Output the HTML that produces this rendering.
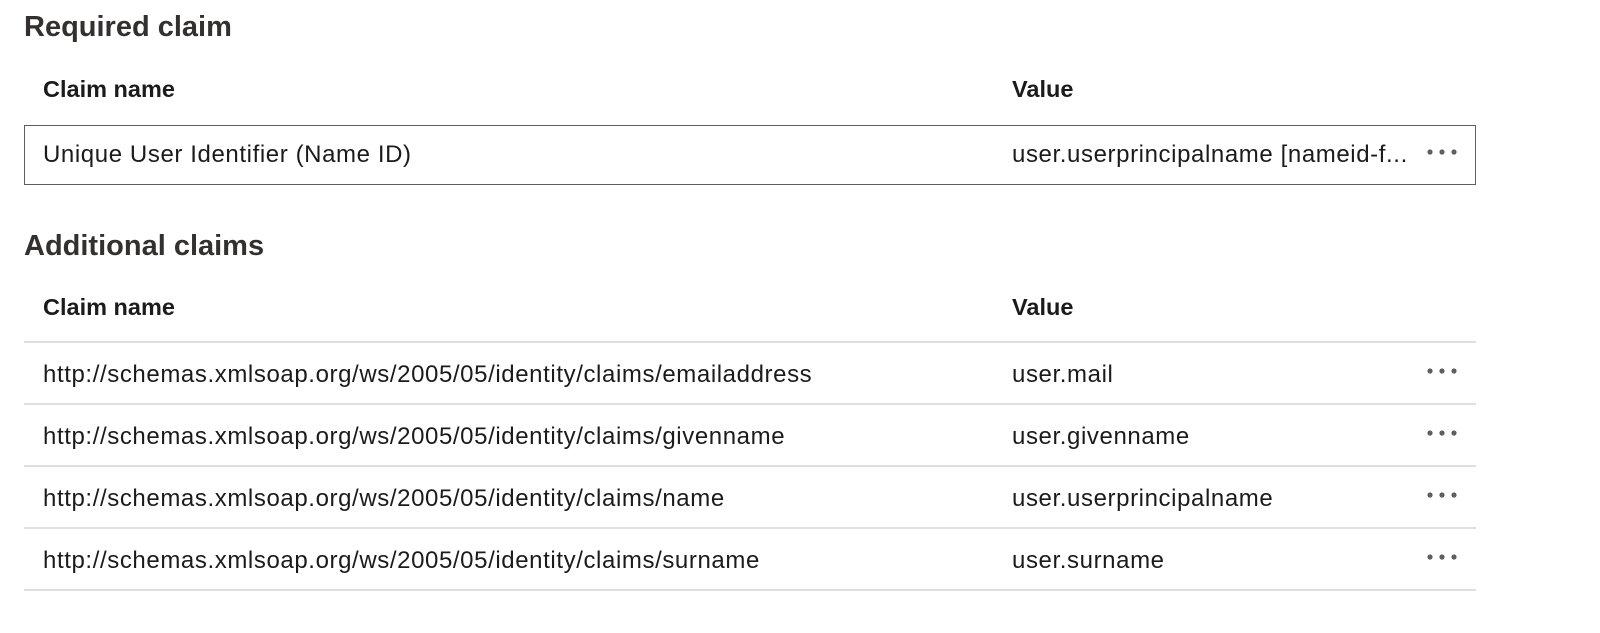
<!DOCTYPE html>
<html><head><style>
body{margin:0;width:1600px;height:633px;background:#fff;font-family:"Liberation Sans",sans-serif;color:#1b1b1b;position:relative;overflow:hidden}
.a{position:absolute;white-space:nowrap;line-height:1}
.h{font-size:29px;font-weight:600;left:24px;color:#323130}
.th{font-size:23.5px;font-weight:bold;color:#1b1b1b}
.td{font-size:24px;letter-spacing:0.6px}
.line{position:absolute;left:24px;width:1452px;height:2px;background:#e1dfdd}
.dots{position:absolute;left:1424px;width:36px;height:10px}
</style></head><body>
<div class="a h" style="top:13px">Required claim</div>
<div class="a th" style="left:43px;top:78px">Claim name</div>
<div class="a th" style="left:1012px;top:78px">Value</div>
<div style="position:absolute;left:24px;top:125px;width:1450px;height:58px;border:1px solid #605e5c"></div>
<div class="a td" style="left:43px;top:143px">Unique User Identifier (Name ID)</div>
<div class="a td" style="left:1012px;top:143px">user.userprincipalname [nameid-f...</div>
<svg class="dots" style="top:147px"><circle cx="6" cy="5" r="2.6" fill="#605e5c"/><circle cx="18" cy="5" r="2.6" fill="#605e5c"/><circle cx="30" cy="5" r="2.6" fill="#605e5c"/></svg>

<div class="a h" style="top:232px">Additional claims</div>
<div class="a th" style="left:43px;top:296px">Claim name</div>
<div class="a th" style="left:1012px;top:296px">Value</div>
<div class="line" style="top:341px"></div>
<div class="a td" style="left:43px;top:363px">http://schemas.xmlsoap.org/ws/2005/05/identity/claims/emailaddress</div>
<div class="a td" style="left:1012px;top:363px">user.mail</div>
<svg class="dots" style="top:366px"><circle cx="6" cy="5" r="2.6" fill="#605e5c"/><circle cx="18" cy="5" r="2.6" fill="#605e5c"/><circle cx="30" cy="5" r="2.6" fill="#605e5c"/></svg>
<div class="line" style="top:403px"></div>
<div class="a td" style="left:43px;top:425px">http://schemas.xmlsoap.org/ws/2005/05/identity/claims/givenname</div>
<div class="a td" style="left:1012px;top:425px">user.givenname</div>
<svg class="dots" style="top:428px"><circle cx="6" cy="5" r="2.6" fill="#605e5c"/><circle cx="18" cy="5" r="2.6" fill="#605e5c"/><circle cx="30" cy="5" r="2.6" fill="#605e5c"/></svg>
<div class="line" style="top:465px"></div>
<div class="a td" style="left:43px;top:487px">http://schemas.xmlsoap.org/ws/2005/05/identity/claims/name</div>
<div class="a td" style="left:1012px;top:487px">user.userprincipalname</div>
<svg class="dots" style="top:490px"><circle cx="6" cy="5" r="2.6" fill="#605e5c"/><circle cx="18" cy="5" r="2.6" fill="#605e5c"/><circle cx="30" cy="5" r="2.6" fill="#605e5c"/></svg>
<div class="line" style="top:527px"></div>
<div class="a td" style="left:43px;top:549px">http://schemas.xmlsoap.org/ws/2005/05/identity/claims/surname</div>
<div class="a td" style="left:1012px;top:549px">user.surname</div>
<svg class="dots" style="top:552px"><circle cx="6" cy="5" r="2.6" fill="#605e5c"/><circle cx="18" cy="5" r="2.6" fill="#605e5c"/><circle cx="30" cy="5" r="2.6" fill="#605e5c"/></svg>
<div class="line" style="top:589px"></div>
</body></html>
